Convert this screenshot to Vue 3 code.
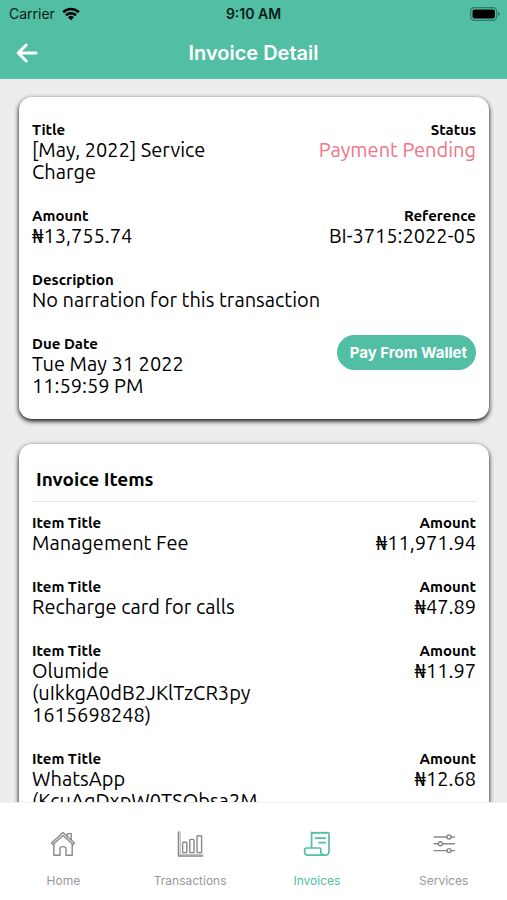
<script setup>
const items = [
  { title: 'Management Fee', amount: '₦11,971.94' },
  { title: 'Recharge card for calls', amount: '₦47.89' },
  { title: 'Olumide\n(uIkkgA0dB2JKlTzCR3py\n1615698248)', amount: '₦11.97' },
  { title: 'WhatsApp\n(KcuAgDxpW0TSObsa2M', amount: '₦12.68' },
]
</script>

<template>
  <div class="app">
    <header class="top">
      <div class="status-bar">
        <span class="carrier">
          Carrier
          <svg class="wifi" viewBox="0 0 18 14" aria-hidden="true">
            <path d="M1.2 5.2 A11.2 11.2 0 0 1 16.8 5.2" />
            <path d="M4 8.2 A7.2 7.2 0 0 1 14 8.2" />
            <path class="solid" d="M9 13.2 L6 10.2 A4.4 4.4 0 0 1 12 10.2 Z" />
          </svg>
        </span>
        <span class="time">9:10 AM</span>
        <svg class="battery" viewBox="0 0 30 14" aria-hidden="true">
          <rect class="shell" x="0.7" y="0.7" width="26" height="12.6" rx="3.6" />
          <rect x="2.5" y="2.5" width="22.4" height="9" rx="2" />
          <path class="tip" d="M28 4.8 Q29.8 5.6 29.8 7 T28 9.2 Z" />
        </svg>
      </div>
      <div class="title-bar">
        <button class="back" type="button" aria-label="Back">
          <svg viewBox="0 0 22 20" aria-hidden="true">
            <path d="M20 10 H2.5 M10.2 2 L2.2 10 L10.2 18" />
          </svg>
        </button>
        <h1>Invoice Detail</h1>
      </div>
    </header>

    <main class="content">
      <section class="card summary">
        <div class="row">
          <div class="field">
            <span class="label">Title</span>
            <span class="value">[May, 2022] Service<br />Charge</span>
          </div>
          <div class="field end">
            <span class="label">Status</span>
            <span class="value pending">Payment Pending</span>
          </div>
        </div>
        <div class="row">
          <div class="field">
            <span class="label">Amount</span>
            <span class="value">₦13,755.74</span>
          </div>
          <div class="field end">
            <span class="label">Reference</span>
            <span class="value">BI-3715:2022-05</span>
          </div>
        </div>
        <div class="field">
          <span class="label">Description</span>
          <span class="value">No narration for this transaction</span>
        </div>
        <div class="row">
          <div class="field">
            <span class="label">Due Date</span>
            <span class="value">Tue May 31 2022<br />11:59:59 PM</span>
          </div>
          <button class="pay" type="button">Pay From Wallet</button>
        </div>
      </section>

      <section class="card items">
        <h2>Invoice Items</h2>
        <div v-for="item in items" :key="item.title" class="row">
          <div class="field">
            <span class="label">Item Title</span>
            <span class="value">{{ item.title }}</span>
          </div>
          <div class="field end">
            <span class="label">Amount</span>
            <span class="value">{{ item.amount }}</span>
          </div>
        </div>
      </section>
    </main>

    <nav class="tabs">
      <a class="tab" href="#home">
        <svg viewBox="0 0 28 28" aria-hidden="true">
          <path d="M2.6 13 L14 2.4 L25.4 13 L24 14.6 L14 5.4 L4 14.6 Z" />
          <path d="M4.8 14 V25.2 H11 V18.4 Q11 16.6 14 16.6 T17 18.4 V25.2 H23.2 V14" />
          <path d="M18.4 6.2 V3.6 H22.2 V9.8" />
        </svg>
        Home
      </a>
      <a class="tab" href="#transactions">
        <svg viewBox="0 0 28 28" aria-hidden="true">
          <path d="M2.4 2 V26 H26.6" />
          <path d="M4.2 2 V24.4 H26.6" opacity="0.5" />
          <rect x="6.6" y="12.2" width="4.2" height="10.4" rx="0.8" />
          <rect x="13.8" y="9.4" width="4.2" height="13.2" rx="0.8" />
          <rect x="21" y="5.8" width="4.6" height="16.8" rx="0.8" />
        </svg>
        Transactions
      </a>
      <a class="tab active" href="#invoices" aria-current="page">
        <svg viewBox="0 0 28 28" aria-hidden="true">
          <path d="M8.6 18 V2.4 L10 3.2 L11.6 2.4 L13.2 3.2 L14.8 2.4 L16.4 3.2 L18 2.4 L19.6 3.2 L21.2 2.4 L22.8 3.2 L24.4 2.4 L26 3.2 V21 Q26 25.2 22 25.2 H5.2 Q1.6 25.2 1.6 21.6 V20 Q1.6 18 3.6 18 H16.6 Q17.8 18 17.8 19.4 V21.4 Q18 25.2 22 25.2" />
          <path d="M12.6 8.2 H22.2 M16 12.6 H22.2" />
        </svg>
        Invoices
      </a>
      <a class="tab" href="#services">
        <svg viewBox="0 0 28 28" aria-hidden="true">
          <path d="M4 7 H16.8 M21.2 7 H24.4 M4 13.8 H8.2 M12.6 13.8 H24.4 M4 20.6 H16.8 M21.2 20.6 H24.4" />
          <circle cx="19" cy="7" r="2" />
          <circle cx="10.4" cy="13.8" r="2" />
          <circle cx="19" cy="20.6" r="2" />
        </svg>
        Services
      </a>
    </nav>
  </div>
</template>

<style>
body {
  margin: 0;
  background: #ededed;
}
</style>

<style scoped>
.app {
  display: flex;
  flex-direction: column;
  height: 100vh;
  background: #ededed;
  color: #000;
  font-family: Ubuntu, 'Noto Sans', sans-serif;
}

.top {
  flex: none;
  background: #52bea3;
  font-family: Inter, sans-serif;
}

.status-bar {
  display: grid;
  grid-template-columns: 1fr auto 1fr;
  align-items: center;
  height: 27px;
  padding: 0 7px;
  font-size: 14px;
  color: #0a1c18;
}

.carrier {
  display: flex;
  align-items: center;
  gap: 7px;
  padding-left: 2px;
}

.wifi {
  width: 18px;
  height: 14px;
  fill: none;
  stroke: #000;
  stroke-width: 2.6;
}

.wifi .solid {
  fill: #000;
  stroke: none;
}

.time {
  font-weight: 600;
}

.battery {
  justify-self: end;
  width: 30px;
  height: 14px;
}

.battery .shell {
  fill: none;
  stroke: #2f7a68;
  stroke-width: 1.2;
}

.battery .tip {
  fill: #2f7a68;
}

.title-bar {
  display: grid;
  grid-template-columns: 1fr auto 1fr;
  align-items: center;
  height: 52px;
  padding: 0 16px;
}

.back {
  justify-self: start;
  display: flex;
  padding: 0;
  border: 0;
  background: none;
}

.back svg {
  width: 22px;
  height: 20px;
  fill: none;
  stroke: #fff;
  stroke-width: 3;
  stroke-linecap: round;
  stroke-linejoin: round;
}

h1 {
  margin: 0;
  color: #fff;
  font-size: 20px;
  line-height: 24px;
  font-weight: 600;
}

.content {
  flex: 1;
  min-height: 0;
  display: flex;
  flex-direction: column;
  gap: 25px;
  padding: 18px 18px 0 19px;
  overflow-y: auto;
  scrollbar-width: none;
}

.card {
  flex: none;
  display: flex;
  flex-direction: column;
  gap: 24px;
  padding: 24px 13px 22px;
  border-radius: 13px;
  background: #fff;
  box-shadow: 0 2px 5px #000;
}

.row {
  display: flex;
  justify-content: space-between;
  align-items: flex-start;
}

.field {
  display: flex;
  flex-direction: column;
}

.end {
  text-align: right;
}

.label {
  font-size: 15px;
  line-height: 18px;
  font-weight: 700;
}

.value {
  font-size: 20px;
  line-height: 22px;
  font-weight: 400;
  white-space: pre-line;
}

.pending {
  color: #f07488;
}

.pay {
  height: 35px;
  padding: 0 9px 0 13px;
  border: 0;
  border-radius: 18px;
  background: #52bea3;
  color: #fff;
  font-family: Inter, sans-serif;
  font-size: 15px;
  font-weight: 700;
}

h2 {
  margin: 0 0 -12px;
  padding: 0 4px 11px;
  border-bottom: 1px solid #e4e4e4;
  font-size: 19px;
  line-height: 22px;
  font-weight: 700;
}

.tabs {
  flex: none;
  display: grid;
  grid-template-columns: repeat(4, 1fr);
  padding: 27px 0 11px;
  background: #fff;
  border-top: 1px solid #f0f0f0;
}

.tab {
  display: flex;
  flex-direction: column;
  align-items: center;
  gap: 15px;
  color: #999;
  font-family: Inter, sans-serif;
  font-size: 12px;
  line-height: 16px;
  text-decoration: none;
}

.tab svg {
  width: 28px;
  height: 28px;
  fill: none;
  stroke: #888;
  stroke-width: 1.4;
  stroke-linejoin: round;
  stroke-linecap: round;
}

.active {
  color: #52bea3;
}

.active svg {
  stroke: #52bea3;
  stroke-width: 1.7;
}
</style>
